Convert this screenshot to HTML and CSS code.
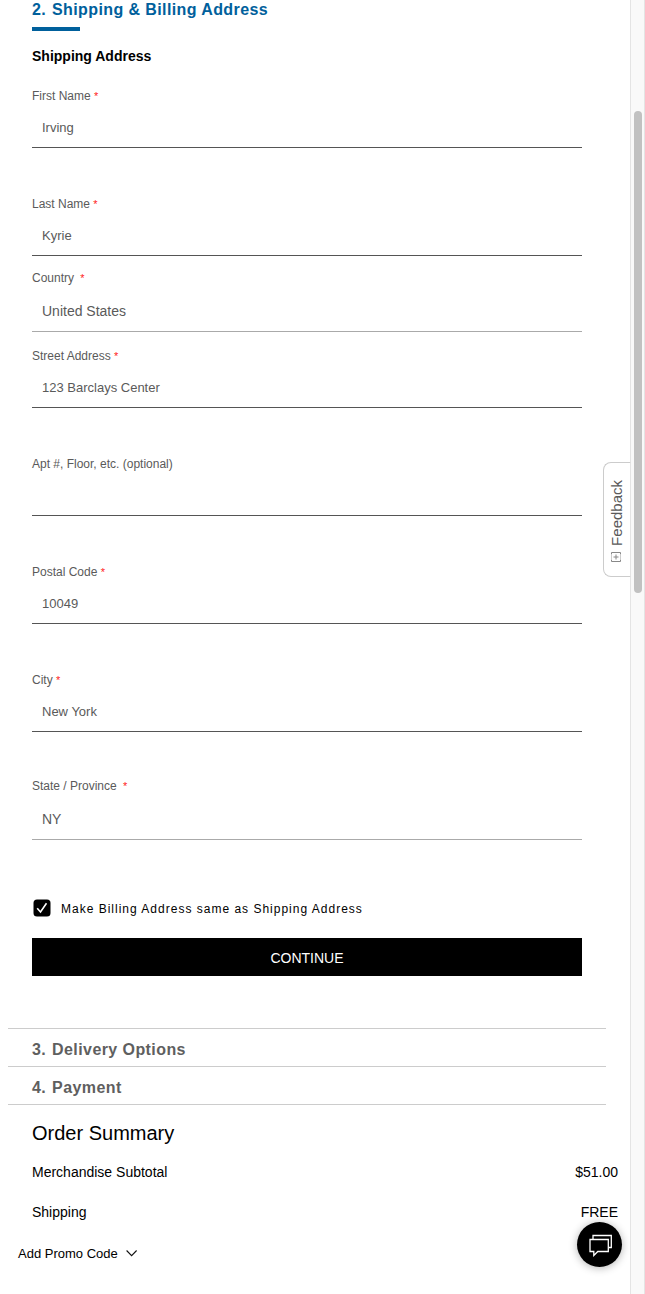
FILE: index.html
```html
<!DOCTYPE html>
<html lang="en">
<head>
<meta charset="utf-8">
<title>Checkout</title>
<link rel="stylesheet" href="styles.css">
</head>
<body>
<div class="page">
  <main class="content">
    <section class="address">
      <h2 class="step-title"><span class="num">2.</span> Shipping &amp; Billing Address</h2>
      <div class="title-bar"></div>
      <h3 class="subtitle">Shipping Address</h3>
      <div class="field first"><div class="label">First Name <span class="req">*</span></div><div class="value">Irving</div></div>
      <div class="field"><div class="label">Last Name <span class="req">*</span></div><div class="value">Kyrie</div></div>
      <div class="field select country"><div class="label">Country <span class="req wide">*</span></div><div class="value">United States</div></div>
      <div class="field street"><div class="label">Street Address <span class="req">*</span></div><div class="value">123 Barclays Center</div></div>
      <div class="field"><div class="label optional">Apt #, Floor, etc. (optional)</div><div class="value"></div></div>
      <div class="field"><div class="label">Postal Code <span class="req">*</span></div><div class="value">10049</div></div>
      <div class="field"><div class="label">City <span class="req">*</span></div><div class="value">New York</div></div>
      <div class="field select state"><div class="label">State / Province <span class="req wide">*</span></div><div class="value">NY</div></div>
      <div class="same">
        <svg class="check" width="18" height="18" viewBox="0 0 18 18"><rect x="0.5" y="0.5" width="17" height="17" rx="3.5" fill="#000"/><path d="M4.200 9.300 7.500 13 13.500 4.300" fill="none" stroke="#fff" stroke-width="1.6"/></svg>
        <span class="same-text">Make Billing Address same as Shipping Address</span>
      </div>
      <div class="continue">CONTINUE</div>
    </section>
    <section class="steps">
      <div class="step"><span class="num">3.</span> Delivery Options</div>
      <div class="step"><span class="num">4.</span> Payment</div>
    </section>
    <section class="summary">
      <h2 class="summary-title">Order Summary</h2>
      <div class="row"><span>Merchandise Subtotal</span><span>$51.00</span></div>
      <div class="row"><span>Shipping</span><span>FREE</span></div>
    </section>
    <div class="promo"><span>Add Promo Code</span><svg width="12" height="8" viewBox="0 0 12 8"><path d="M.6 1.500 5.600 6.700 10.600 1.500" fill="none" stroke="#111" stroke-width="1.1"/></svg></div>
  </main>
  <div class="scroll"><div class="thumb"></div></div>
  <div class="feedback">
    <span class="feedback-text">Feedback</span>
    <svg width="10" height="10" viewBox="0 0 10 10" fill="none" stroke="#888" stroke-width="1"><path d="M.5 2.500V.5H9.500V2.500M.5 7.500V9.500H9.500V7.500"/><path d="M.5 2.500v5M9.500 2.500v5" stroke="#ccc"/><path d="M5 2.500v5M2.500 5h5"/></svg>
  </div>
  <div class="chat">
    <svg width="24" height="24" viewBox="0 0 24 24" fill="none" stroke="#fff" stroke-width="1.300"><path d="M5 6.500V2.500H23.300V14.500H20.500"/><path d="M2 6.500H20.300V18.500H9.800L5.800 22.500V18.500H2Z"/></svg>
  </div>
</div>
</body>
</html>
```

FILE: styles.css
```css
* { box-sizing: border-box; }
body { margin: 0; background: #fff; font-family: "Liberation Sans", Arial, sans-serif; color: #000; overflow: hidden; }
h2, h3 { margin: 0; }
.page { position: relative; display: flex; width: 645px; height: 1294px; overflow: hidden; }
.content { flex: 1; }
.address { padding: 0 48px 0 32px; }
.step-title { height: 27px; font-size: 16px; line-height: 19px; letter-spacing: 0.4px; color: #00609c; white-space: nowrap; }
.num { margin-right: 1px; }
.title-bar { width: 48px; height: 4px; background: #00609c; }
.subtitle { margin-top: 16px; height: 41px; font-size: 14px; line-height: 18px; }
.field { height: 60px; margin-top: 48px; color: #5a5a5a; }
.field.first { margin-top: 0; }
.label { height: 16px; font-size: 12px; line-height: 16px; white-space: pre; }
.req { color: #f22; font-size: 11px; }
.req.wide { margin-left: 3px; }
.value { height: 44px; padding: 0 10px; font-size: 13px; line-height: 47px; border-bottom: 1px solid #555; }
.field.select { height: 62px; }
.select .value { height: 46px; font-size: 14px; line-height: 50px; border-bottom-color: #aaa; }
.field.country { margin-top: 14px; }
.field.street { margin-top: 16px; }
.field.state { margin-top: 46px; }
.same { display: flex; align-items: center; gap: 10px; height: 18px; margin-top: 59px; padding-left: 1px; font-size: 12px; letter-spacing: 1px; white-space: nowrap; }
.same-text { padding-top: 2px; }
.continue { height: 38px; margin-top: 21px; background: #000; color: #fff; font-size: 14px; line-height: 40px; text-align: center; }
.steps { margin: 52px 24px 0 8px; border-top: 1px solid #ccc; }
.step { height: 38px; padding-left: 24px; border-bottom: 1px solid #ccc; color: #5f5f5f; font-size: 16px; font-weight: bold; line-height: 41px; letter-spacing: 0.42px; }
.summary { padding: 16px 12px 0 32px; }
.summary-title { height: 31px; font-size: 20px; font-weight: normal; line-height: 24px; }
.row { display: flex; justify-content: space-between; height: 40px; font-size: 14px; line-height: 40px; }
.promo { display: flex; align-items: center; gap: 8px; height: 20px; margin-top: 11px; padding-left: 18px; font-size: 13px; }
.scroll { width: 15px; padding: 111px 2px 0 3px; background: #f9f9f9; border-left: 1px solid #e4e4e4; border-right: 1px solid #e4e4e4; }
.thumb { width: 8px; height: 482px; border-radius: 4px; background: #c1c1c1; }
.feedback { position: absolute; left: 603px; top: 462px; width: 28px; height: 115px; display: flex; flex-direction: column; align-items: center; gap: 6px; padding: 17px 2px 0 0; background: #fff; border: 1px solid #ccc; border-right-color: #e4e4e4; border-radius: 8px 0 0 8px; }
.feedback-text { writing-mode: vertical-rl; transform: rotate(180deg); font-size: 15px; line-height: 17px; color: #5a5a5a; }
.chat { position: absolute; left: 577px; top: 1222px; width: 45px; height: 45px; display: flex; align-items: center; justify-content: center; border-radius: 50%; background: #000; box-shadow: 0 1px 8px rgba(0, 0, 0, 0.3); }
```
